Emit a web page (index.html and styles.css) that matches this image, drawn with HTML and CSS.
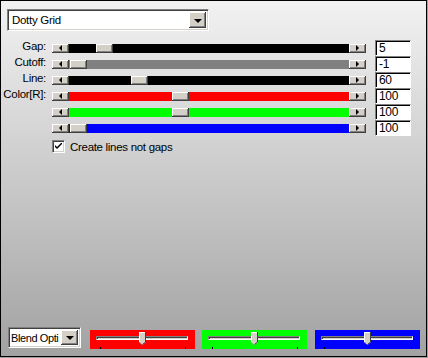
FILE: index.html
```html
<!DOCTYPE html>
<html lang="en">
<head>
    <meta charset="UTF-8">
    <title>Dotty Grid</title>
    <link rel="stylesheet" href="styles.css">
</head>
<body>
<div class="panel">

    <div class="combo preset">
        <span class="combo-text">Dotty Grid</span>
        <span class="drop-btn"><span class="down"></span></span>
    </div>

    <div class="rows">
        <span class="label">Gap:</span>
        <div class="scroll">
            <span class="arrow"><span class="tri left"></span></span>
            <div class="track black"><span class="thumb" style="left:27px"></span></div>
            <span class="arrow"><span class="tri right"></span></span>
        </div>
        <div class="num">5</div>

        <span class="label">Cutoff:</span>
        <div class="scroll">
            <span class="arrow"><span class="tri left"></span></span>
            <div class="track grey"><span class="thumb" style="left:1px"></span></div>
            <span class="arrow"><span class="tri right"></span></span>
        </div>
        <div class="num">-1</div>

        <span class="label">Line:</span>
        <div class="scroll">
            <span class="arrow"><span class="tri left"></span></span>
            <div class="track black"><span class="thumb" style="left:62px"></span></div>
            <span class="arrow"><span class="tri right"></span></span>
        </div>
        <div class="num">60</div>

        <span class="label">Color[R]:</span>
        <div class="scroll">
            <span class="arrow"><span class="tri left"></span></span>
            <div class="track red"><span class="thumb" style="left:103px"></span></div>
            <span class="arrow"><span class="tri right"></span></span>
        </div>
        <div class="num">100</div>

        <span class="label"></span>
        <div class="scroll">
            <span class="arrow"><span class="tri left"></span></span>
            <div class="track green"><span class="thumb" style="left:103px"></span></div>
            <span class="arrow"><span class="tri right"></span></span>
        </div>
        <div class="num">100</div>

        <span class="label"></span>
        <div class="scroll">
            <span class="arrow"><span class="tri left"></span></span>
            <div class="track blue"><span class="thumb" style="left:1px"></span></div>
            <span class="arrow"><span class="tri right"></span></span>
        </div>
        <div class="num">100</div>
    </div>

    <div class="check">
        <span class="box">
            <svg width="7" height="7" viewBox="0 0 7 7"><path d="M0 2 L0 4 L2 6 L7 1 L7 -1 L2 4 Z" fill="#000"/></svg>
        </span>
        <span class="check-text">Create lines not gaps</span>
    </div>

    <div class="footer">
        <div class="combo blend">
            <span class="combo-text">Blend Opti</span>
            <span class="drop-btn"><span class="down"></span></span>
        </div>
        <div class="swatch red">
            <span class="groove"></span>
            <span class="tick" style="left:10px"></span>
            <span class="tick" style="left:95px"></span>
            <svg class="pointer" width="7" height="13" viewBox="0 0 7 13">
                <path d="M0 0 H7 V10 L3.5 13 L0 10 Z" fill="#d4d0c8"/>
                <path d="M0.5 10 V0.5 H6" stroke="#fff" fill="none"/>
                <path d="M6.5 0 V10 L3.5 12.5" stroke="#404040" fill="none"/>
            </svg>
        </div>
        <div class="swatch green">
            <span class="groove"></span>
            <span class="tick" style="left:10px"></span>
            <span class="tick" style="left:95px"></span>
            <svg class="pointer" width="7" height="13" viewBox="0 0 7 13">
                <path d="M0 0 H7 V10 L3.5 13 L0 10 Z" fill="#d4d0c8"/>
                <path d="M0.5 10 V0.5 H6" stroke="#fff" fill="none"/>
                <path d="M6.5 0 V10 L3.5 12.5" stroke="#404040" fill="none"/>
            </svg>
        </div>
        <div class="swatch blue">
            <span class="groove"></span>
            <span class="tick" style="left:9px"></span>
            <span class="tick" style="left:96px"></span>
            <svg class="pointer" width="7" height="13" viewBox="0 0 7 13">
                <path d="M0 0 H7 V10 L3.5 13 L0 10 Z" fill="#d4d0c8"/>
                <path d="M0.5 10 V0.5 H6" stroke="#fff" fill="none"/>
                <path d="M6.5 0 V10 L3.5 12.5" stroke="#404040" fill="none"/>
            </svg>
        </div>
    </div>

</div>
</body>
</html>
```

FILE: styles.css
```css
body {
    margin: 0;
    background-color: #a0a0a0;
    font-family: 'Liberation Sans', Arial, sans-serif;
    font-size: 11.5px;
    letter-spacing: -0.3px;
    color: #000;
}
.panel {
    box-sizing: border-box;
    width: 427px;
    height: 357px;
    border: 1px solid #000;
    background: linear-gradient(#f2f2f2, #a2a2a2);
    display: flex;
    flex-direction: column;
}

/* combo boxes */
.combo {
    box-sizing: border-box;
    display: flex;
    align-items: center;
    background-color: #fff;
    border: 1px solid;
    border-color: #808080 #fff #fff #808080;
    box-shadow: inset 1px 1px #404040, inset -1px -1px #d4d0c8;
    padding: 2px 2px 2px 4px;
    overflow: hidden;
}
.combo-text {
    flex: 1;
    white-space: nowrap;
    overflow: hidden;
}
.preset {
    width: 202px;
    height: 22px;
    margin: 8px 0 0 6px;
}
.drop-btn {
    box-sizing: border-box;
    width: 17px;
    height: 100%;
    flex-shrink: 0;
    background-color: #d4d0c8;
    box-shadow: inset -1px -1px #404040, inset 1px 1px #fff, inset -2px -2px #808080;
    display: flex;
    align-items: center;
    justify-content: center;
}
.down {
    width: 0;
    height: 0;
    border-left: 4px solid transparent;
    border-right: 4px solid transparent;
    border-top: 4px solid #000;
    margin-top: 1px;
}

/* slider rows */
.rows {
    display: grid;
    grid-template-columns: 51px 314px 45px;
    grid-auto-rows: 16px;
    margin-top: 9px;
}
.label {
    text-align: right;
    padding-right: 6px;
    line-height: 13px;
}
.scroll {
    display: flex;
    height: 9px;
    margin-top: 4px;
}
.arrow {
    box-sizing: border-box;
    width: 17px;
    height: 9px;
    flex-shrink: 0;
    background-color: #d4d0c8;
    box-shadow: inset -1px -1px #404040, inset 1px 1px #fff, inset -2px -2px #808080;
    display: flex;
    align-items: center;
    justify-content: center;
}
.tri {
    width: 0;
    height: 0;
    border-top: 3px solid transparent;
    border-bottom: 3px solid transparent;
    margin-top: -1px;
}
.tri.left { border-right: 3px solid #000; }
.tri.right { border-left: 3px solid #000; }
.track {
    flex: 1;
    position: relative;
}
.track.black { background-color: #000; }
.track.grey { background-color: #808080; }
.track.red { background-color: #ff0000; }
.track.green { background-color: #00ff00; }
.track.blue { background-color: #0000ff; }
.thumb {
    position: absolute;
    top: 0;
    width: 17px;
    height: 9px;
    box-sizing: border-box;
    background-color: #d4d0c8;
    box-shadow: inset -1px -1px #404040, inset 1px 1px #fff, inset -2px -2px #808080;
}
.num {
    box-sizing: border-box;
    height: 16px;
    margin-left: 9px;
    background-color: #fff;
    border: 1px solid;
    border-color: #808080 #fff #fff #808080;
    box-shadow: inset 1px 1px #000;
    padding-left: 3px;
    font-size: 12px;
    line-height: 14px;
}

/* checkbox */
.check {
    display: flex;
    align-items: center;
    margin: 4px 0 0 51px;
    height: 13px;
}
.box {
    box-sizing: border-box;
    width: 13px;
    height: 13px;
    background-color: #fff;
    border: 1px solid;
    border-color: #808080 #fff #fff #808080;
    box-shadow: inset 1px 1px #404040, inset -1px -1px #d4d0c8;
    display: flex;
    align-items: center;
    justify-content: center;
}
.check-text {
    margin-left: 5px;
}

/* bottom bar */
.footer {
    margin-top: auto;
    margin-bottom: 7px;
    display: flex;
    align-items: flex-start;
    padding-left: 7px;
}
.blend {
    width: 73px;
    height: 21px;
    padding-left: 2px;
}
.blend .combo-text {
    font-size: 11px;
    letter-spacing: -0.4px;
}
.swatch {
    position: relative;
    width: 105px;
    height: 19px;
    margin-top: 3px;
}
.swatch.red { background-color: #ff0000; margin-left: 9px; }
.swatch.green { background-color: #00ff00; margin-left: 7px; }
.swatch.blue { background-color: #0000ff; margin-left: 8px; }
.groove {
    position: absolute;
    left: 6px;
    top: 6px;
    width: 92px;
    height: 4px;
    box-sizing: border-box;
    background-color: #d4d0c8;
    border: 1px solid;
    border-color: #808080 #fff #fff #808080;
    box-shadow: inset 1px 1px #404040;
}
.tick {
    position: absolute;
    top: 17px;
    width: 1px;
    height: 2px;
    background-color: #000;
}
.pointer {
    position: absolute;
    left: 49px;
    top: 2px;
}
```
